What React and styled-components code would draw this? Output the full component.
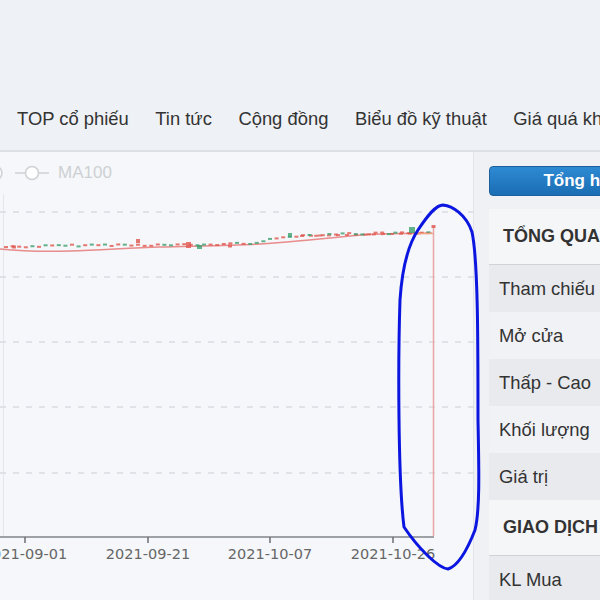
import React from "react";
import styled, { createGlobalStyle } from "styled-components";

const GlobalStyle = createGlobalStyle`
  html, body {
    margin: 0;
    padding: 0;
    background: #eef1f5;
  }
  * { box-sizing: border-box; }
`;

const Page = styled.div`
  position: relative;
  width: 600px;
  height: 600px;
  overflow: hidden;
  display: flex;
  flex-direction: column;
  background: #eef1f5;
  font-family: "Liberation Sans", Arial, sans-serif;
  color: #333;
`;

const TopSpace = styled.div`
  height: 100px;
  flex-shrink: 0;
`;

const Nav = styled.nav`
  height: 52px;
  flex-shrink: 0;
  display: flex;
  align-items: center;
  gap: 26.5px;
  padding: 0 0 12px 17px;
  border-bottom: 2px solid #dde1e6;
  white-space: nowrap;
`;

const NavItem = styled.span`
  font-size: 18.4px;
  color: #333;
`;

const Main = styled.div`
  flex: 1;
  display: flex;
  min-height: 0;
`;

const ChartPanel = styled.div`
  width: 474px;
  flex-shrink: 0;
  display: flex;
  flex-direction: column;
  background: #f5f7fa;
  border-right: 1px solid #e1e4e8;
`;

const Legend = styled.div`
  height: 42px;
  flex-shrink: 0;
  display: flex;
  align-items: center;
  gap: 8px;
`;

const LegendText = styled.span`
  font-size: 17px;
  color: #cdd0d3;
`;

const ChartSvg = styled.svg`
  display: block;
  flex-shrink: 0;
`;

const SidePanel = styled.div`
  flex: 1;
  display: flex;
  flex-direction: column;
  padding: 14px 0 0 15px;
  background: #eff1f4;
  overflow: hidden;
`;

const TabButton = styled.div`
  width: 188px;
  height: 30px;
  flex-shrink: 0;
  display: flex;
  align-items: center;
  justify-content: center;
  border-radius: 4px;
  border: 1px solid #1b5f9c;
  background: linear-gradient(#2e8ad3, #1a6db3);
  color: #fff;
  font-weight: bold;
  font-size: 17px;
  white-space: nowrap;
`;

const Heading = styled.div`
  height: 56px;
  flex-shrink: 0;
  display: flex;
  align-items: center;
  padding-left: 14px;
  margin-top: ${(p) => p.$top || 0}px;
  font-weight: bold;
  font-size: 18px;
  color: #333;
  white-space: nowrap;
  background: #f5f6f8;
  border-bottom: 1px solid #cfd3d8;
`;

const Row = styled.div`
  height: 47px;
  flex-shrink: 0;
  display: flex;
  align-items: center;
  padding-left: 10px;
  font-size: 18.4px;
  color: #333;
  white-space: nowrap;
  background: ${(p) => (p.$alt ? "#f1f2f5" : "#e8eaee")};
`;

const Overlay = styled.svg`
  position: absolute;
  left: 0;
  top: 0;
  pointer-events: none;
`;

const navItems = ["TOP cổ phiếu", "Tin tức", "Cộng đồng", "Biểu đồ kỹ thuật", "Giá quá khứ"];

const gridYs = [212, 277, 342, 407, 473];
const ticks = [
  { x: 25, label: "2021-09-01" },
  { x: 148, label: "2021-09-21" },
  { x: 270, label: "2021-10-07" },
  { x: 393, label: "2021-10-26" },
];

const basePts = [
  [0, 247], [100, 245], [200, 245], [250, 243], [290, 236], [330, 234], [430, 233],
];

function baseY(x) {
  for (let i = 0; i < basePts.length - 1; i++) {
    const [x0, y0] = basePts[i];
    const [x1, y1] = basePts[i + 1];
    if (x >= x0 && x <= x1) return y0 + ((y1 - y0) * (x - x0)) / (x1 - x0);
  }
  return 233;
}

// small candles along the price line
const candles = [];
let seed = 7;
const rnd = () => {
  seed = (seed * 9301 + 49297) % 233280;
  return seed / 233280;
};
for (let x = 4; x < 428; x += 6.6) {
  const up = rnd() > 0.5;
  candles.push({ x, y: baseY(x) + (rnd() - 0.5) * 2, w: 4, h: 2, up });
}
const bigCandles = [
  { x: 136, y: 241, w: 4, h: 4, up: false },
  { x: 186, y: 245, w: 5, h: 6, up: false },
  { x: 197, y: 247, w: 5, h: 4, up: true },
  { x: 288, y: 235, w: 4, h: 4, up: true },
  { x: 409, y: 230, w: 6, h: 6, up: true },
  { x: 12, y: 247, w: 4, h: 3, up: false },
  { x: 228, y: 246, w: 4, h: 3, up: false },
];

const maPath =
  "M0 249 C20 251, 40 252, 70 251 S130 248, 160 247 S230 246, 260 244 S320 239, 350 236 S400 234, 432 233";

function Chart() {
  return (
    <ChartSvg viewBox="0 194 474 406" width="474" height="406">
      <line x1="3.5" y1="194" x2="3.5" y2="537" stroke="#e4e7ea" strokeWidth="1" />
      {gridYs.map((y) => (
        <line key={y} x1="0" y1={y} x2="474" y2={y} stroke="#d8dbdf" strokeWidth="1.3" strokeDasharray="6 7" />
      ))}
      <path d={maPath} fill="none" stroke="#e88c8c" strokeWidth="1.5" />
      <line x1="300" y1="236" x2="434" y2="233" stroke="#e2574f" strokeWidth="2" strokeDasharray="4 5" opacity="0.75" />
      {candles.map((c, i) => (
        <rect key={i} x={c.x} y={c.y - c.h / 2} width={c.w} height={c.h} fill={c.up ? "#3c9f6e" : "#e0574f"} opacity="0.8" />
      ))}
      {bigCandles.map((c, i) => (
        <rect key={"b" + i} x={c.x} y={c.y - c.h / 2} width={c.w} height={c.h} fill={c.up ? "#3c9f6e" : "#e0574f"} opacity="0.8" />
      ))}
      <line x1="418" y1="233.5" x2="433" y2="233.5" stroke="#f0a27f" strokeWidth="1.5" />
      <line x1="433.5" y1="226" x2="433.5" y2="536" stroke="#eaa6a6" strokeWidth="1.5" />
      <rect x="431.5" y="225" width="4" height="3" fill="#e0574f" opacity="0.8" />
      <line x1="0" y1="537" x2="434" y2="537" stroke="#9ea1a5" strokeWidth="2" />
      {ticks.map((t) => (
        <g key={t.x}>
          <line x1={t.x} y1="537" x2={t.x} y2="543" stroke="#6b6e72" strokeWidth="1.5" />
          <text
            x={t.x}
            y="559"
            textAnchor="middle"
            fontFamily="'DejaVu Sans', Verdana, sans-serif"
            fontSize="14.5"
            fill="#666"
          >
            {t.label}
          </text>
        </g>
      ))}
    </ChartSvg>
  );
}

export default function App() {
  return (
    <>
      <GlobalStyle />
      <Page>
        <TopSpace />
        <Nav>
          {navItems.map((n) => (
            <NavItem key={n}>{n}</NavItem>
          ))}
        </Nav>
        <Main>
          <ChartPanel>
            <Legend>
              <svg width="50" height="20" viewBox="0 0 50 20">
                <circle cx="-5" cy="10" r="7" fill="none" stroke="#cfd1d4" strokeWidth="1.5" />
                <line x1="15" y1="10" x2="49" y2="10" stroke="#cfd1d4" strokeWidth="1.5" />
                <circle cx="32" cy="10" r="6.5" fill="#fff" stroke="#cfd1d4" strokeWidth="1.5" />
              </svg>
              <LegendText>MA100</LegendText>
            </Legend>
            <Chart />
          </ChartPanel>
          <SidePanel>
            <TabButton>Tổng hợp</TabButton>
            <Heading $top={13}>TỔNG QUAN</Heading>
            <Row>Tham chiếu</Row>
            <Row $alt>Mở cửa</Row>
            <Row>Thấp - Cao</Row>
            <Row $alt>Khối lượng</Row>
            <Row>Giá trị</Row>
            <Heading>GIAO DỊCH</Heading>
            <Row>KL Mua</Row>
          </SidePanel>
        </Main>
        <Overlay width="600" height="600" viewBox="0 0 600 600">
          <path
            d="M443 205 C452 206, 466 214, 472 232 C478 260, 478 340, 478 420 C479 470, 480 510, 475 530 C468 548, 458 566, 448 569 C438 568, 418 548, 404 527 C398 480, 398 360, 400 300 C402 270, 408 245, 418 230 C428 215, 436 205, 443 205 Z"
            fill="none"
            stroke="#0b16e0"
            strokeWidth="3"
            strokeLinejoin="round"
          />
        </Overlay>
      </Page>
    </>
  );
}
